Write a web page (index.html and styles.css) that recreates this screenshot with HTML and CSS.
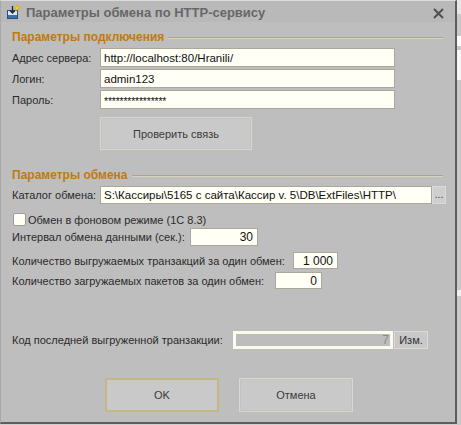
FILE: index.html
```html
<!DOCTYPE html>
<html lang="ru">
<head>
<meta charset="utf-8">
<title>Параметры обмена по HTTP-сервису</title>
<link rel="stylesheet" href="styles.css">
</head>
<body>
<div class="window">
  <div class="titlebar">
    <svg class="icon" width="16" height="16" viewBox="0 0 16 16">
      <rect x="2.5" y="6.5" width="10" height="8" fill="#dfe8f2" stroke="#2a4f7c"/>
      <rect x="3" y="11" width="9" height="3" fill="#3c6ea8"/>
      <path d="M7.5 2 V9 M5 6.5 L7.5 9 L10 6.5" stroke="#1b2f4a" stroke-width="1.4" fill="none"/>
      <path d="M12 0.5 L12.8 3 L15.5 3.5 L13 4.6 L13.6 7 L12 5.4 L10.4 7 L11 4.6 L8.5 3.5 L11.2 3 Z" fill="#f4d21e" stroke="#d9a800" stroke-width="0.5"/>
    </svg>
    <span class="title">Параметры обмена по HTTP-сервису</span>
    <svg class="close" width="11" height="11" viewBox="0 0 11 11">
      <path d="M1 1 L10 10 M10 1 L1 10" stroke="#505050" stroke-width="2"/>
    </svg>
  </div>
  <div class="content">
    <div class="section first"><span>Параметры подключения</span></div>
    <div class="row r1"><span class="label w88">Адрес сервера:</span><div class="input w295">http://localhost:80/Hranili/</div></div>
    <div class="row r2"><span class="label w88">Логин:</span><div class="input w295">admin123</div></div>
    <div class="row r2"><span class="label w88">Пароль:</span><div class="input w295 pwd">****************</div></div>
    <div class="btn check">Проверить связь</div>

    <div class="section second"><span>Параметры обмена</span></div>
    <div class="row cat"><span class="label w88">Каталог обмена:</span><div class="input w332">S:\Кассиры\5165 с сайта\Кассир v. 5\DB\ExtFiles\HTTP\</div><div class="dots">...</div></div>
    <div class="row chk"><span class="box"></span><span class="label">Обмен в фоновом режиме (1С 8.3)</span></div>
    <div class="row num r-int"><span class="label w178">Интервал обмена данными (сек.):</span><div class="input right w68">30</div></div>
    <div class="row num2 r-q1"><span class="label w281">Количество выгружаемых транзакций за один обмен:</span><div class="input right w45">1 000</div></div>
    <div class="row num2 r-q2"><span class="label w263">Количество загружаемых пакетов за один обмен:</span><div class="input right w47">0</div></div>
    <div class="row code"><span class="label w221">Код последней выгруженной транзакции:</span><div class="disabled">7</div><div class="izm">Изм.</div></div>
    <div class="buttons"><div class="btn ok">OK</div><div class="btn cancel">Отмена</div></div>
  </div>
</div>
<div class="sliver">
  <div class="s-a"></div>
  <div class="s-b"></div>
  <div class="s-c"></div>
  <div class="s-d"></div>
</div>
</body>
</html>
```
FILE: styles.css
```css
html, body {
  margin: 0;
  padding: 0;
}
body {
  display: flex;
  width: 461px;
  height: 425px;
  overflow: hidden;
  background: #d0d0d0;
  font-family: "Liberation Sans", Arial, sans-serif;
  font-size: 11px;
  color: #2b2b2b;
}
.window {
  box-sizing: border-box;
  width: 457px;
  height: 424px;
  background: #bebebe;
  border-top: 1px solid #dcdcdc;
  border-left: 1px solid #a9a9a9;
  border-right: 2px solid #5d5d5d;
  border-bottom: 2px solid #5d5d5d;
  display: flex;
  flex-direction: column;
}
.titlebar {
  height: 21px;
  background: #b9b9b9;
  display: flex;
  align-items: center;
  padding-left: 4px;
  padding-right: 11px;
}
.icon {
  flex: none;
}
.title {
  margin-left: 5px;
  font-size: 13px;
  font-weight: bold;
  color: #676767;
  flex: 1;
  margin-top: 1px;
}
.close {
  flex: none;
  margin-top: 3px;
}
.content {
  padding-left: 11px;
  display: flex;
  flex-direction: column;
}
.section {
  width: 431px;
  height: 14px;
  display: flex;
  align-items: center;
  font-size: 12px;
  font-weight: bold;
  color: #c27a0c;
}
.section::after {
  content: "";
  flex: 1;
  margin-left: 4px;
  margin-top: 2px;
  border-top: 1px solid #aca58c;
  border-bottom: 1px solid #d9d4bd;
}
.section.first { margin-top: 8px; }
.section.second { margin-top: 18px; }
.row {
  display: flex;
  align-items: center;
}
.r1 { margin-top: 4px; height: 19px; }
.r2 { margin-top: 2px; height: 19px; }
.label {
  flex: none;
  white-space: nowrap;
}
.w88 { width: 88px; }
.w178 { width: 178px; }
.w281 { width: 281px; }
.w263 { width: 263px; }
.w221 { width: 221px; }
.input {
  box-sizing: border-box;
  height: 100%;
  background: #fffff6;
  border: 1px solid #a9a89b;
  color: #111;
  font-size: 11.5px;
  padding: 0 3px;
  display: flex;
  align-items: center;
  white-space: nowrap;
  overflow: hidden;
}
.input.pwd { font-size: 10.5px; letter-spacing: -0.2px; padding-top: 2px; }
.input.right { justify-content: flex-end; padding-right: 4px; font-size: 12px; }
.w295 { width: 295px; }
.w332 { width: 332px; }
.w68 { width: 68px; }
.w45 { width: 45px; }
.w47 { width: 47px; }
.btn {
  box-sizing: border-box;
  display: flex;
  align-items: center;
  justify-content: center;
  background: #c9c9c9;
  border: 1px solid #d6d6cc;
  box-shadow: inset 0 0 0 1px #c4c4be;
  font-size: 11px;
  color: #3a3a3a;
}
.check {
  margin-top: 8px;
  margin-left: 88px;
  width: 152px;
  height: 33px;
}
.cat { margin-top: 4px; height: 18px; }
.dots {
  box-sizing: border-box;
  width: 14px;
  height: 18px;
  background: #cfcfcf;
  border: 1px solid #dadada;
  font-size: 10px;
  color: #333;
  display: flex;
  justify-content: center;
  align-items: center;
  padding-bottom: 2px;
}
.chk { margin-top: 9px; height: 13px; }
.box {
  box-sizing: border-box;
  width: 13px;
  height: 13px;
  margin-left: 1px;
  margin-right: 2px;
  background: #fffff6;
  border: 1px solid #9c9c94;
  border-radius: 2px;
}
.r-int { margin-top: 2px; height: 18px; }
.r-q1 { margin-top: 6px; height: 17px; }
.r-q2 { margin-top: 3px; height: 17px; }
.code { margin-top: 42px; height: 18px; }
.disabled {
  box-sizing: border-box;
  width: 160px;
  height: 18px;
  background: #bdbdbd;
  border: 3px solid #fbfbee;
  color: #8a8a8a;
  font-size: 12px;
  display: flex;
  align-items: center;
  justify-content: flex-end;
  padding-right: 1px;
}
.izm {
  box-sizing: border-box;
  width: 34px;
  height: 18px;
  margin-left: 1px;
  background: #c8c8c8;
  border: 1px solid #dcdcd4;
  font-size: 11px;
  color: #333;
  display: flex;
  align-items: center;
  justify-content: center;
}
.buttons {
  margin-top: 29px;
  margin-left: 93px;
  display: flex;
  gap: 20px;
}
.buttons .btn {
  width: 114px;
  height: 34px;
}
.ok {
  border: 2px solid #c7b685;
  box-shadow: none;
}
.cancel {
  border: 1px solid #d8d8ce;
}
.sliver {
  width: 4px;
  height: 425px;
  background: #c9c9c9;
  display: flex;
  flex-direction: column;
}
.s-a { height: 14px; background: #e6e6e6; }
.s-b { margin-top: 22px; height: 10px; background: #ffffff; }
.s-c { margin-top: 4px; height: 30px; background: #f6f6f6; }
.s-d { margin-top: 210px; height: 6px; background: #f0f0f0; }
```
